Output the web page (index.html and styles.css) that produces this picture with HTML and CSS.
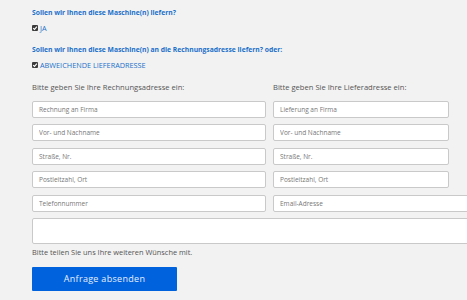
FILE: index.html
```html
<!DOCTYPE html>
<html lang="de">

<head>
    <meta charset="UTF-8">
    <title>Anfrage</title>
    <link rel="stylesheet" href="styles.css">
</head>

<body>
    <form class="order">
        <p class="question">Sollen wir Ihnen diese Maschine(n) liefern?</p>
        <label class="check"><span class="box"><svg viewBox="0 0 6 6" width="6" height="6"><path d="M1.2 3.1 2.5 4.4 4.9 1.6" fill="none" stroke="#fff" stroke-width="1.1"/></svg></span>JA</label>

        <p class="question">Sollen wir Ihnen diese Maschine(n) an die Rechnungsadresse liefern? oder:</p>
        <label class="check"><span class="box"><svg viewBox="0 0 6 6" width="6" height="6"><path d="M1.2 3.1 2.5 4.4 4.9 1.6" fill="none" stroke="#fff" stroke-width="1.1"/></svg></span>ABWEICHENDE LIEFERADRESSE</label>

        <div class="columns">
            <div class="col col-left">
                <p class="col-title">Bitte geben Sie Ihre Rechnungsadresse ein:</p>
                <input class="field" type="text" placeholder="Rechnung an Firma">
                <input class="field" type="text" placeholder="Vor- und Nachname">
                <input class="field" type="text" placeholder="Straße, Nr.">
                <input class="field" type="text" placeholder="Postleitzahl, Ort">
                <input class="field" type="text" placeholder="Telefonnummer">
            </div>
            <div class="col col-right">
                <p class="col-title">Bitte geben Sie Ihre Lieferadresse ein:</p>
                <input class="field" type="text" placeholder="Lieferung an Firma">
                <input class="field" type="text" placeholder="Vor- und Nachname">
                <input class="field" type="text" placeholder="Straße, Nr.">
                <input class="field" type="text" placeholder="Postleitzahl, Ort">
                <input class="field field-wide" type="text" placeholder="Email-Adresse">
            </div>
        </div>

        <textarea class="notes"></textarea>
        <p class="hint">Bitte teilen Sie uns Ihre weiteren Wünsche mit.</p>

        <button class="send" type="button">Anfrage absenden</button>
    </form>
</body>

</html>
```

FILE: styles.css
```css
html,
body {
    margin: 0;
    padding: 0;
    background: #f2f2f2;
    overflow: hidden;
}

body {
    font-family: "Open Sans", "Liberation Sans", sans-serif;
    color: #555;
}

.order {
    width: 500px;
    padding: 6px 0 0 32px;
}

.question {
    margin: 0;
    font-size: 6.75px;
    line-height: 13px;
    font-weight: bold;
    color: #1a6fc9;
}

.check {
    display: flex;
    align-items: center;
    gap: 2px;
    height: 13px;
    margin: 2px 0 9px;
    font-size: 7.3px;
    color: #1a6fc9;
}

.check:last-of-type {
    margin-bottom: 8px;
}

.box {
    display: inline-flex;
    width: 6px;
    height: 6px;
    background: #3c3c3c;
    border-radius: 1px;
}

.columns {
    display: grid;
    grid-template-columns: 234px 1fr;
    column-gap: 7px;
    margin-top: 10px;
}

.col {
    display: flex;
    flex-direction: column;
    gap: 6.5px;
}

.col-title {
    margin: 0 0 1px;
    font-size: 7.6px;
    line-height: 12px;
    color: #555;
}

.field {
    box-sizing: border-box;
    height: 17px;
    width: 100%;
    margin: 0;
    padding: 0 6px;
    border: 1px solid #c9c9c9;
    border-radius: 2px;
    background: #fff;
    font-family: inherit;
    font-size: 6.5px;
}

.col-right .field {
    width: 176px;
}

.col-right .field-wide {
    width: 220px;
}

.field::placeholder {
    color: #777;
}

.notes {
    display: block;
    box-sizing: border-box;
    width: 470px;
    height: 26px;
    margin: 6px 0 0;
    border: 1px solid #c9c9c9;
    border-radius: 2px;
    background: #fff;
    resize: none;
}

.hint {
    margin: 2px 0 0;
    font-size: 7.4px;
    line-height: 13px;
    color: #555;
}

.send {
    display: block;
    width: 145px;
    height: 24px;
    margin-top: 8px;
    border: 0;
    border-radius: 1px;
    background: #0062dc;
    color: #e8f0ff;
    font-family: inherit;
    font-size: 9px;
    letter-spacing: 0.3px;
}
```
